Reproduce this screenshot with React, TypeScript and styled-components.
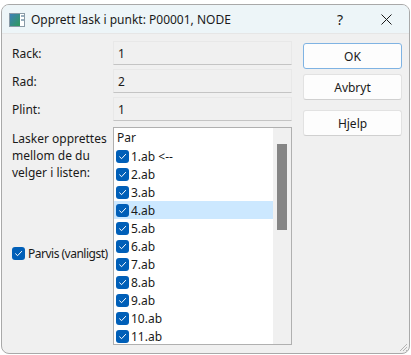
import styled, { createGlobalStyle } from 'styled-components';

const GlobalStyle = createGlobalStyle`
  html, body {
    margin: 0;
    padding: 0;
    background: #ffffff;
  }
  body {
    font-family: 'Segoe UI', 'Noto Sans', sans-serif;
    font-size: 12px;
    color: #1a1a1a;
  }
`;

const items = [
  '1.ab <--',
  '2.ab',
  '3.ab',
  '4.ab',
  '5.ab',
  '6.ab',
  '7.ab',
  '8.ab',
  '9.ab',
  '10.ab',
  '11.ab',
];

const fields = [
  { label: 'Rack:', value: '1' },
  { label: 'Rad:', value: '2' },
  { label: 'Plint:', value: '1' },
];

const CheckIcon = () => (
  <svg width="13" height="13" viewBox="0 0 13 13">
    <rect x="0" y="0" width="13" height="13" rx="3" fill="#005fb8" />
    <path
      d="M3.6 6.8 L5.6 8.7 L9.6 4.4"
      fill="none"
      stroke="#ffffff"
      strokeWidth="1"
      strokeLinecap="round"
      strokeLinejoin="round"
    />
  </svg>
);

const AppIcon = () => (
  <svg width="16" height="14" viewBox="0 0 16 14">
    <defs>
      <linearGradient id="ig" x1="0" y1="0" x2="1" y2="1">
        <stop offset="0" stopColor="#3d7fb8" />
        <stop offset="1" stopColor="#2f9a5a" />
      </linearGradient>
    </defs>
    <rect x="0.5" y="0.5" width="15" height="13" fill="#ffffff" stroke="#8a9aa6" />
    <rect x="1" y="1" width="10" height="12" fill="url(#ig)" />
    <rect x="12" y="2" width="3" height="2" fill="#9ab0bf" />
    <rect x="12" y="6" width="3" height="2" fill="#9ab0bf" />
  </svg>
);

const App = () => {
  return (
    <>
      <GlobalStyle />
      <Page>
        <Window>
          <TitleBar>
            <TitleIcon>
              <AppIcon />
            </TitleIcon>
            <TitleText>Opprett lask i punkt: P00001, NODE</TitleText>
            <TitleButton>?</TitleButton>
            <TitleButton>
              <svg width="11" height="11" viewBox="0 0 11 11">
                <path d="M0.5 0.5 L10.5 10.5 M10.5 0.5 L0.5 10.5" stroke="#1a1a1a" strokeWidth="1" />
              </svg>
            </TitleButton>
          </TitleBar>
          <Body>
            <Form>
              {fields.map((f) => (
                <FieldRow key={f.label}>
                  <Label>{f.label}</Label>
                  <ReadOnlyField>{f.value}</ReadOnlyField>
                </FieldRow>
              ))}
              <ListRow>
                <ListSide>
                  <Label>
                    Lasker opprettes
                    <br />
                    mellom de du
                    <br />
                    velger i listen:
                  </Label>
                  <CheckLine>
                    <CheckIcon />
                    <span>Parvis (vanligst)</span>
                  </CheckLine>
                </ListSide>
                <ListBox>
                  <ListInner>
                    <ListHeader>Par</ListHeader>
                    {items.map((it, i) => (
                      <ListItem key={it} selected={i === 3}>
                        <CheckIcon />
                        <span>{it}</span>
                      </ListItem>
                    ))}
                  </ListInner>
                  <ScrollTrack>
                    <ScrollThumb />
                  </ScrollTrack>
                </ListBox>
              </ListRow>
            </Form>
            <Buttons>
              <Button primary>OK</Button>
              <Button>Avbryt</Button>
              <Button spaced>Hjelp</Button>
            </Buttons>
            <Grip>
              <svg width="10" height="10" viewBox="0 0 10 10">
                <path d="M9 2 L2 9 M9 5 L5 9 M9 8 L8 9" stroke="#b4b4b4" strokeWidth="1" />
              </svg>
            </Grip>
          </Body>
        </Window>
      </Page>
    </>
  );
};

const Page = styled.div`
  padding: 4px 0 0 1px;
  width: 411px;
  height: 355px;
  box-sizing: border-box;
`;

const Window = styled.div`
  width: 409px;
  height: 350px;
  box-sizing: border-box;
  border: 1px solid #a9a9a9;
  border-radius: 8px;
  overflow: hidden;
  background: #f0f0f0;
  display: flex;
  flex-direction: column;
`;

const TitleBar = styled.div`
  height: 28px;
  display: flex;
  align-items: center;
  background: #edf5f8;
  flex-shrink: 0;
`;

const TitleIcon = styled.div`
  width: 16px;
  height: 14px;
  margin: 2px 6px 0 7px;
  display: flex;
`;

const TitleText = styled.div`
  flex: 1;
  font-size: 12px;
  color: #1a1a1a;
  padding-top: 1px;
`;

const TitleButton = styled.div`
  width: 46px;
  height: 28px;
  display: flex;
  align-items: center;
  justify-content: center;
  font-size: 14px;
  color: #1a1a1a;
`;

const Body = styled.div`
  position: relative;
  flex: 1;
  display: flex;
  padding: 7px 0 0 10px;
  border-top: 1px solid #e6e6e6;
`;

const Form = styled.div`
  width: 280px;
  display: flex;
  flex-direction: column;
  gap: 4px;
`;

const FieldRow = styled.div`
  display: grid;
  grid-template-columns: 101px 179px;
  align-items: center;
`;

const Label = styled.div`
  font-size: 12px;
  line-height: 17px;
  color: #1a1a1a;
`;

const ReadOnlyField = styled.div`
  height: 24px;
  box-sizing: border-box;
  border: 1px solid #e8e8e8;
  border-bottom-color: #c4c4c4;
  background: #f0f0f0;
  padding: 3px 4px 0;
  font-size: 12px;
  line-height: 17px;
`;

const ListRow = styled.div`
  display: grid;
  grid-template-columns: 101px 179px;
  margin-top: 2px;
`;

const ListSide = styled.div`
  display: flex;
  flex-direction: column;
  padding-top: 3px;
`;

const CheckLine = styled.div`
  display: flex;
  align-items: center;
  gap: 3px;
  margin-top: 64px;
  white-space: nowrap;
  line-height: 17px;
  font-size: 12px;
  letter-spacing: -0.5px;

  svg {
    flex-shrink: 0;
  }
`;

const ListBox = styled.div`
  height: 218px;
  box-sizing: border-box;
  border: 1px solid #b0b0b0;
  background: #ffffff;
  display: flex;
  overflow: hidden;
`;

const ListInner = styled.div`
  flex: 1;
  display: flex;
  flex-direction: column;
  padding-top: 1px;
`;

const ListHeader = styled.div`
  height: 18px;
  line-height: 18px;
  padding-left: 3px;
`;

const ListItem = styled.div<{ selected?: boolean }>`
  height: 18px;
  flex-shrink: 0;
  display: flex;
  align-items: center;
  gap: 2px;
  padding-left: 2px;
  background: ${({ selected }) => (selected ? '#cce8ff' : 'transparent')};

  svg {
    flex-shrink: 0;
  }
`;

const ScrollTrack = styled.div`
  width: 18px;
  background: #f0f0f0;
  padding: 16px 0 0 4px;
  box-sizing: border-box;
`;

const ScrollThumb = styled.div`
  width: 10px;
  height: 86px;
  background: #858585;
`;

const Buttons = styled.div`
  margin-left: 11px;
  padding-top: 2px;
  display: flex;
  flex-direction: column;
  gap: 5px;
`;

const Button = styled.div<{ primary?: boolean; spaced?: boolean }>`
  width: 99px;
  height: 26px;
  box-sizing: border-box;
  display: flex;
  align-items: center;
  justify-content: center;
  background: #fdfdfd;
  border: 1px solid ${({ primary }) => (primary ? '#7fb3e3' : '#e2e2e2')};
  border-bottom-color: ${({ primary }) => (primary ? '#7fb3e3' : '#d0d0d0')};
  border-radius: 3px;
  margin-top: ${({ spaced }) => (spaced ? '5px' : '0')};
  font-size: 12px;
  color: #1a1a1a;
`;

const Grip = styled.div`
  position: absolute;
  right: 1px;
  bottom: 1px;
  display: flex;
`;

export default App;
